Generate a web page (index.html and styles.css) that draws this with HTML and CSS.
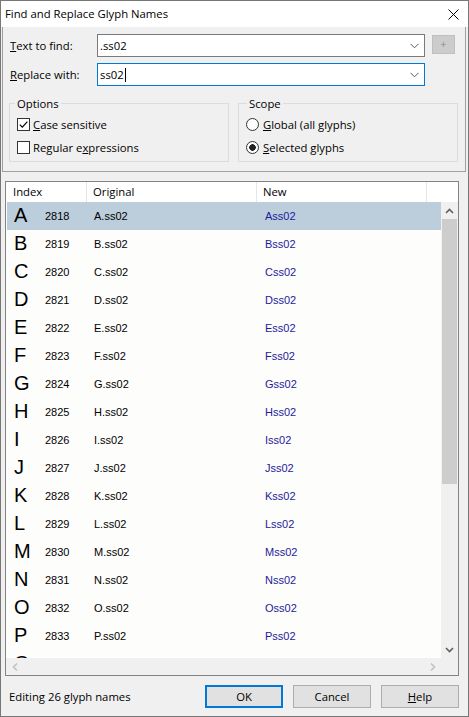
FILE: index.html
```html
<!DOCTYPE html>
<html>
<head>
<meta charset="utf-8">
<title>Find and Replace Glyph Names</title>
<link rel="stylesheet" href="styles.css">
</head>
<body>
<div class="win">
  <div class="titlebar">
    <span class="title">Find and Replace Glyph Names</span>
    <svg class="close" width="11" height="11" viewBox="0 0 11 11"><path d="M0.5 0.5L10.5 10.5M10.5 0.5L0.5 10.5" stroke="#000" stroke-width="1"/></svg>
  </div>
  <div class="top">
    <div class="frow">
      <label class="flabel"><u>T</u>ext to find:</label>
      <div class="combo"><span class="ctext">.ss02</span><svg class="chev" width="9" height="6" viewBox="0 0 9 6"><path d="M0.5 0.8L4.5 4.8L8.5 0.8" fill="none" stroke="#5a5a5a" stroke-width="1"/></svg></div>
      <div class="plus">+</div>
    </div>
    <div class="frow">
      <label class="flabel"><u>R</u>eplace with:</label>
      <div class="combo focus"><span class="ctext">ss02</span><span class="caret"></span><svg class="chev" width="9" height="6" viewBox="0 0 9 6"><path d="M0.5 0.8L4.5 4.8L8.5 0.8" fill="none" stroke="#5a5a5a" stroke-width="1"/></svg></div>
    </div>
    <div class="groups">
      <fieldset class="grp opts">
        <legend>Options</legend>
        <div class="opt"><span class="cb"><svg width="11" height="11" viewBox="0 0 11 11"><path d="M1.8 5.6L4.3 8.1L9.4 2.6" fill="none" stroke="#000" stroke-width="1.2"/></svg></span><span><u>C</u>ase sensitive</span></div>
        <div class="opt"><span class="cb"></span><span>Regular e<u>x</u>pressions</span></div>
      </fieldset>
      <fieldset class="grp scope">
        <legend>Scope</legend>
        <div class="opt"><span class="rb"></span><span><u>G</u>lobal (all glyphs)</span></div>
        <div class="opt"><span class="rb on"></span><span><u>S</u>elected glyphs</span></div>
      </fieldset>
    </div>
  </div>
  <div class="list">
    <div class="lhead">
      <div class="hc c1">Index</div>
      <div class="hc c2">Original</div>
      <div class="hc c3">New</div>
      <div class="hc c4"></div>
    </div>
    <div class="lbody">
      <div class="rows">
        <div class="row sel"><span class="g">A</span><span class="n">2818</span><span class="o">A.ss02</span><span class="nw">Ass02</span></div>
        <div class="row"><span class="g">B</span><span class="n">2819</span><span class="o">B.ss02</span><span class="nw">Bss02</span></div>
        <div class="row"><span class="g">C</span><span class="n">2820</span><span class="o">C.ss02</span><span class="nw">Css02</span></div>
        <div class="row"><span class="g">D</span><span class="n">2821</span><span class="o">D.ss02</span><span class="nw">Dss02</span></div>
        <div class="row"><span class="g">E</span><span class="n">2822</span><span class="o">E.ss02</span><span class="nw">Ess02</span></div>
        <div class="row"><span class="g">F</span><span class="n">2823</span><span class="o">F.ss02</span><span class="nw">Fss02</span></div>
        <div class="row"><span class="g">G</span><span class="n">2824</span><span class="o">G.ss02</span><span class="nw">Gss02</span></div>
        <div class="row"><span class="g">H</span><span class="n">2825</span><span class="o">H.ss02</span><span class="nw">Hss02</span></div>
        <div class="row"><span class="g">I</span><span class="n">2826</span><span class="o">I.ss02</span><span class="nw">Iss02</span></div>
        <div class="row"><span class="g">J</span><span class="n">2827</span><span class="o">J.ss02</span><span class="nw">Jss02</span></div>
        <div class="row"><span class="g">K</span><span class="n">2828</span><span class="o">K.ss02</span><span class="nw">Kss02</span></div>
        <div class="row"><span class="g">L</span><span class="n">2829</span><span class="o">L.ss02</span><span class="nw">Lss02</span></div>
        <div class="row"><span class="g">M</span><span class="n">2830</span><span class="o">M.ss02</span><span class="nw">Mss02</span></div>
        <div class="row"><span class="g">N</span><span class="n">2831</span><span class="o">N.ss02</span><span class="nw">Nss02</span></div>
        <div class="row"><span class="g">O</span><span class="n">2832</span><span class="o">O.ss02</span><span class="nw">Oss02</span></div>
        <div class="row"><span class="g">P</span><span class="n">2833</span><span class="o">P.ss02</span><span class="nw">Pss02</span></div>
        <div class="row"><span class="g">Q</span></div>
      </div>
      <div class="vscroll">
        <div class="sbtn"><svg width="9" height="6" viewBox="0 0 9 6"><path d="M1 5L4.5 1.5L8 5" fill="none" stroke="#606060" stroke-width="1.6"/></svg></div>
        <div class="thumb"></div>
        <div class="track"></div>
        <div class="sbtn"><svg width="9" height="6" viewBox="0 0 9 6"><path d="M1 1L4.5 4.5L8 1" fill="none" stroke="#606060" stroke-width="1.6"/></svg></div>
      </div>
    </div>
    <div class="hscroll">
      <div class="hbar">
        <svg width="6" height="8" viewBox="0 0 6 8"><path d="M5 0.5L1.5 4L5 7.5" fill="none" stroke="#c2c2c2" stroke-width="1.6"/></svg>
        <svg width="6" height="8" viewBox="0 0 6 8"><path d="M1 0.5L4.5 4L1 7.5" fill="none" stroke="#c2c2c2" stroke-width="1.6"/></svg>
      </div>
      <div class="corner"></div>
    </div>
  </div>
  <div class="status">
    <span class="stext">Editing 26 glyph names</span>
    <div class="btns">
      <button class="btn def">OK</button>
      <button class="btn">Cancel</button>
      <button class="btn"><u>H</u>elp</button>
    </div>
  </div>
</div>
</body>
</html>
```
FILE: styles.css
```css
* { box-sizing: border-box; }
html, body { margin: 0; padding: 0; }
body {
  width: 469px;
  height: 717px;
  overflow: hidden;
  background: #f0f0f0;
  font-family: "Open Sans", "Noto Sans", sans-serif;
  font-size: 11.3px;
  color: #000;
}
u { text-decoration: underline; text-underline-offset: 1px; }

.win {
  width: 469px;
  height: 717px;
  border: 1px solid #777;
  background: #f0f0f0;
  display: flex;
  flex-direction: column;
}

.titlebar {
  flex: none;
  height: 26px;
  background: #fff;
  display: flex;
  align-items: center;
  justify-content: space-between;
  padding: 0 9px 0 4px;
}
.title { line-height: 16px; }
.close { display: block; }

.top {
  flex: none;
  margin: 0 2px 0 1px;
  border: 1px solid #a0a0a0;
  border-top: none;
  padding: 7px 0 9px 6px;
}
.frow {
  display: flex;
  align-items: flex-start;
  height: 23px;
}
.frow + .frow { margin-top: 6px; }
.flabel {
  width: 87px;
  margin-left: 1px;
  line-height: 23px;
}
.combo {
  width: 328px;
  height: 23px;
  background: #fff;
  border: 1px solid #7a7a7a;
  display: flex;
  align-items: center;
  padding: 0 5px 0 2px;
}
.combo.focus { border-color: #0078d7; }
.ctext { line-height: 16px; }
.caret {
  width: 1px;
  height: 14px;
  background: #000;
  margin-left: 1px;
}
.chev { margin-left: auto; display: block; }
.plus {
  width: 23px;
  height: 19px;
  margin: 1px 0 0 7px;
  background: #cccccc;
  border: 1px solid #bfbfbf;
  color: #a08585;
  font-size: 11px;
  line-height: 16px;
  text-align: center;
}

.groups {
  display: flex;
  gap: 9px;
  margin-top: 10px;
}
.grp {
  width: 220px;
  margin: 0;
  border: 1px solid #dcdcdc;
  padding: 4px 7px 4px 7px;
  min-width: 0;
}
.grp legend {
  line-height: 15px;
  padding: 0 2px;
}
.opts legend { margin-left: -2px; }
.scope legend { margin-left: 1px; }
.opt {
  display: flex;
  align-items: center;
  height: 19px;
}
.opt + .opt { margin-top: 4px; }
.cb {
  width: 13px;
  height: 13px;
  border: 1px solid #333;
  background: #fff;
  margin-right: 3px;
  flex: none;
  display: flex;
  align-items: center;
  justify-content: center;
}
.cb svg { display: block; }
.rb {
  width: 13px;
  height: 13px;
  border: 1px solid #333;
  border-radius: 50%;
  background: #fff;
  margin-right: 4px;
  flex: none;
}
.rb.on { background: radial-gradient(circle, #222 0, #222 3px, #fff 3.6px); }

.list {
  flex: none;
  margin: 9px 0 0 4px;
  width: 454px;
  height: 495px;
  border: 1px solid #838383;
  background: #fdfdfb;
  display: flex;
  flex-direction: column;
}
.lhead {
  flex: none;
  height: 20px;
  background: #fff;
  display: flex;
}
.hc {
  line-height: 20px;
  border-right: 1px solid #e5e5e5;
  padding-left: 6px;
}
.c1 { width: 81px; padding-left: 7px; }
.c2 { width: 170px; }
.c3 { width: 170px; }
.c4 { flex: 1; border-right: none; }

.lbody {
  flex: none;
  height: 456px;
  display: flex;
}
.rows {
  flex: 1;
  overflow: hidden;
  padding-left: 1px;
}
.row {
  height: 28px;
  display: flex;
  align-items: center;
  font-family: "Liberation Sans", Arial, sans-serif;
  font-size: 11px;
}
.row.sel { background: #bccddc; }
.g {
  width: 38px;
  padding-left: 7px;
  font-size: 20px;
  line-height: 22px;
  margin-top: -2px;
}
.n { width: 49px; }
.o { width: 171px; }
.nw { color: #1e1a9c; }

.vscroll {
  flex: none;
  width: 17px;
  background: #f0f0f0;
  display: flex;
  flex-direction: column;
}
.sbtn {
  flex: none;
  height: 17px;
  display: flex;
  align-items: center;
  justify-content: center;
}
.sbtn svg { display: block; }
.thumb {
  flex: none;
  height: 265px;
  margin: 0 1px;
  background: #cdcdcd;
}
.track { flex: 1; }

.hscroll {
  flex: none;
  height: 17px;
  display: flex;
}
.hbar {
  flex: 1;
  background: #f0f0f0;
  display: flex;
  align-items: center;
  justify-content: space-between;
  padding: 0 5px 0 6px;
}
.hbar svg { display: block; }
.corner {
  width: 17px;
  background: #f0f0f0;
}

.status {
  flex: 1;
  display: flex;
  align-items: flex-start;
  justify-content: space-between;
  padding: 9px 9px 0 8px;
}
.stext { line-height: 23px; }
.btns {
  display: flex;
  gap: 10px;
}
.btn {
  width: 78px;
  height: 23px;
  padding: 0;
  margin: 0;
  background: #e1e1e1;
  border: 1px solid #adadad;
  font-family: "Open Sans", "Noto Sans", sans-serif;
  font-size: 11.3px;
  color: #000;
  line-height: 20px;
}
.btn.def { border: 2px solid #0078d7; }
```
